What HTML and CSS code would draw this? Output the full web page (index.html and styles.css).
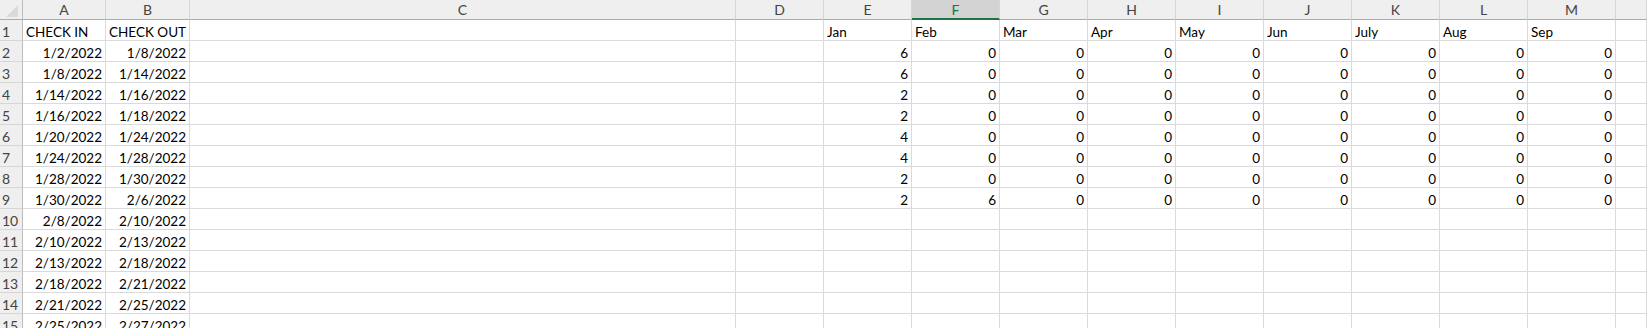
FILE: index.html
```html
<!DOCTYPE html>
<html>
<head>
<meta charset="utf-8">
<link rel="stylesheet" href="styles.css">
</head>
<body>
<div class="sheet">
  <div class="ch corner"><span class="tri"></span></div>
  <div class="ch">A</div><div class="ch">B</div><div class="ch">C</div><div class="ch">D</div><div class="ch">E</div>
  <div class="ch sel">F</div><div class="ch">G</div><div class="ch">H</div><div class="ch">I</div><div class="ch">J</div>
  <div class="ch">K</div><div class="ch">L</div><div class="ch">M</div><div class="ch"></div>
</div>
<script>
</script>
<div class="sheet body" id="grid"></div>
<script src="data.js"></script>
</body>
</html>
```
FILE: data.js
```js
const rows = [
  ["CHECK IN","CHECK OUT","","","Jan","Feb","Mar","Apr","May","Jun","July","Aug","Sep"],
  ["1/2/2022","1/8/2022","","","6","0","0","0","0","0","0","0","0"],
  ["1/8/2022","1/14/2022","","","6","0","0","0","0","0","0","0","0"],
  ["1/14/2022","1/16/2022","","","2","0","0","0","0","0","0","0","0"],
  ["1/16/2022","1/18/2022","","","2","0","0","0","0","0","0","0","0"],
  ["1/20/2022","1/24/2022","","","4","0","0","0","0","0","0","0","0"],
  ["1/24/2022","1/28/2022","","","4","0","0","0","0","0","0","0","0"],
  ["1/28/2022","1/30/2022","","","2","0","0","0","0","0","0","0","0"],
  ["1/30/2022","2/6/2022","","","2","6","0","0","0","0","0","0","0"],
  ["2/8/2022","2/10/2022"],
  ["2/10/2022","2/13/2022"],
  ["2/13/2022","2/18/2022"],
  ["2/18/2022","2/21/2022"],
  ["2/21/2022","2/25/2022"],
  ["2/25/2022","2/27/2022"]
];
const grid = document.getElementById("grid");
rows.forEach((r, i) => {
  const rh = document.createElement("div");
  rh.className = "rh";
  rh.textContent = i + 1;
  grid.appendChild(rh);
  for (let c = 0; c < 14; c++) {
    const d = document.createElement("div");
    const v = r[c] || "";
    d.className = "cell" + (i > 0 && v !== "" ? " num" : "");
    d.textContent = v;
    grid.appendChild(d);
  }
});
```
FILE: styles.css
```css
html, body {
  margin: 0;
  padding: 0;
  background: #fff;
  overflow: hidden;
  width: 1647px;
  height: 328px;
}
.sheet {
  display: grid;
  grid-template-columns: 23px 83px 84px 546px repeat(10, 88px) 1fr;
  grid-auto-rows: 21px;
  font-family: Lato, "Open Sans", sans-serif;
  font-size: 13.5px;
  color: #000;
}
.sheet:first-child {
  grid-auto-rows: 20px;
}
.ch {
  box-sizing: border-box;
  background: #efefef;
  border-right: 1px solid #d6d6d6;
  border-bottom: 1px solid #ababab;
  color: #444;
  text-align: center;
  line-height: 20px;
  font-size: 14px;
}
.ch.corner {
  position: relative;
  border-right: 1px solid #bdbdbd;
}
.tri {
  position: absolute;
  right: 4px;
  bottom: 2px;
  width: 0;
  height: 0;
  border-left: 12px solid transparent;
  border-bottom: 12px solid #dadada;
}
.ch.sel {
  background: #d3d3d3;
  color: #217346;
  border-bottom: 2px solid #217346;
  line-height: 19px;
}
.rh {
  box-sizing: border-box;
  background: #efefef;
  border-right: 1px solid #bdbdbd;
  border-bottom: 1px solid #d6d6d6;
  color: #444;
  padding-left: 2px;
  line-height: 24px;
  font-size: 14px;
  overflow: hidden;
  white-space: nowrap;
}
.cell {
  box-sizing: border-box;
  border-right: 1px solid #dadada;
  border-bottom: 1px solid #dadada;
  padding: 0 3px 0 3px;
  line-height: 24px;
  white-space: nowrap;
  overflow: hidden;
}
.cell.num {
  text-align: right;
}
```
